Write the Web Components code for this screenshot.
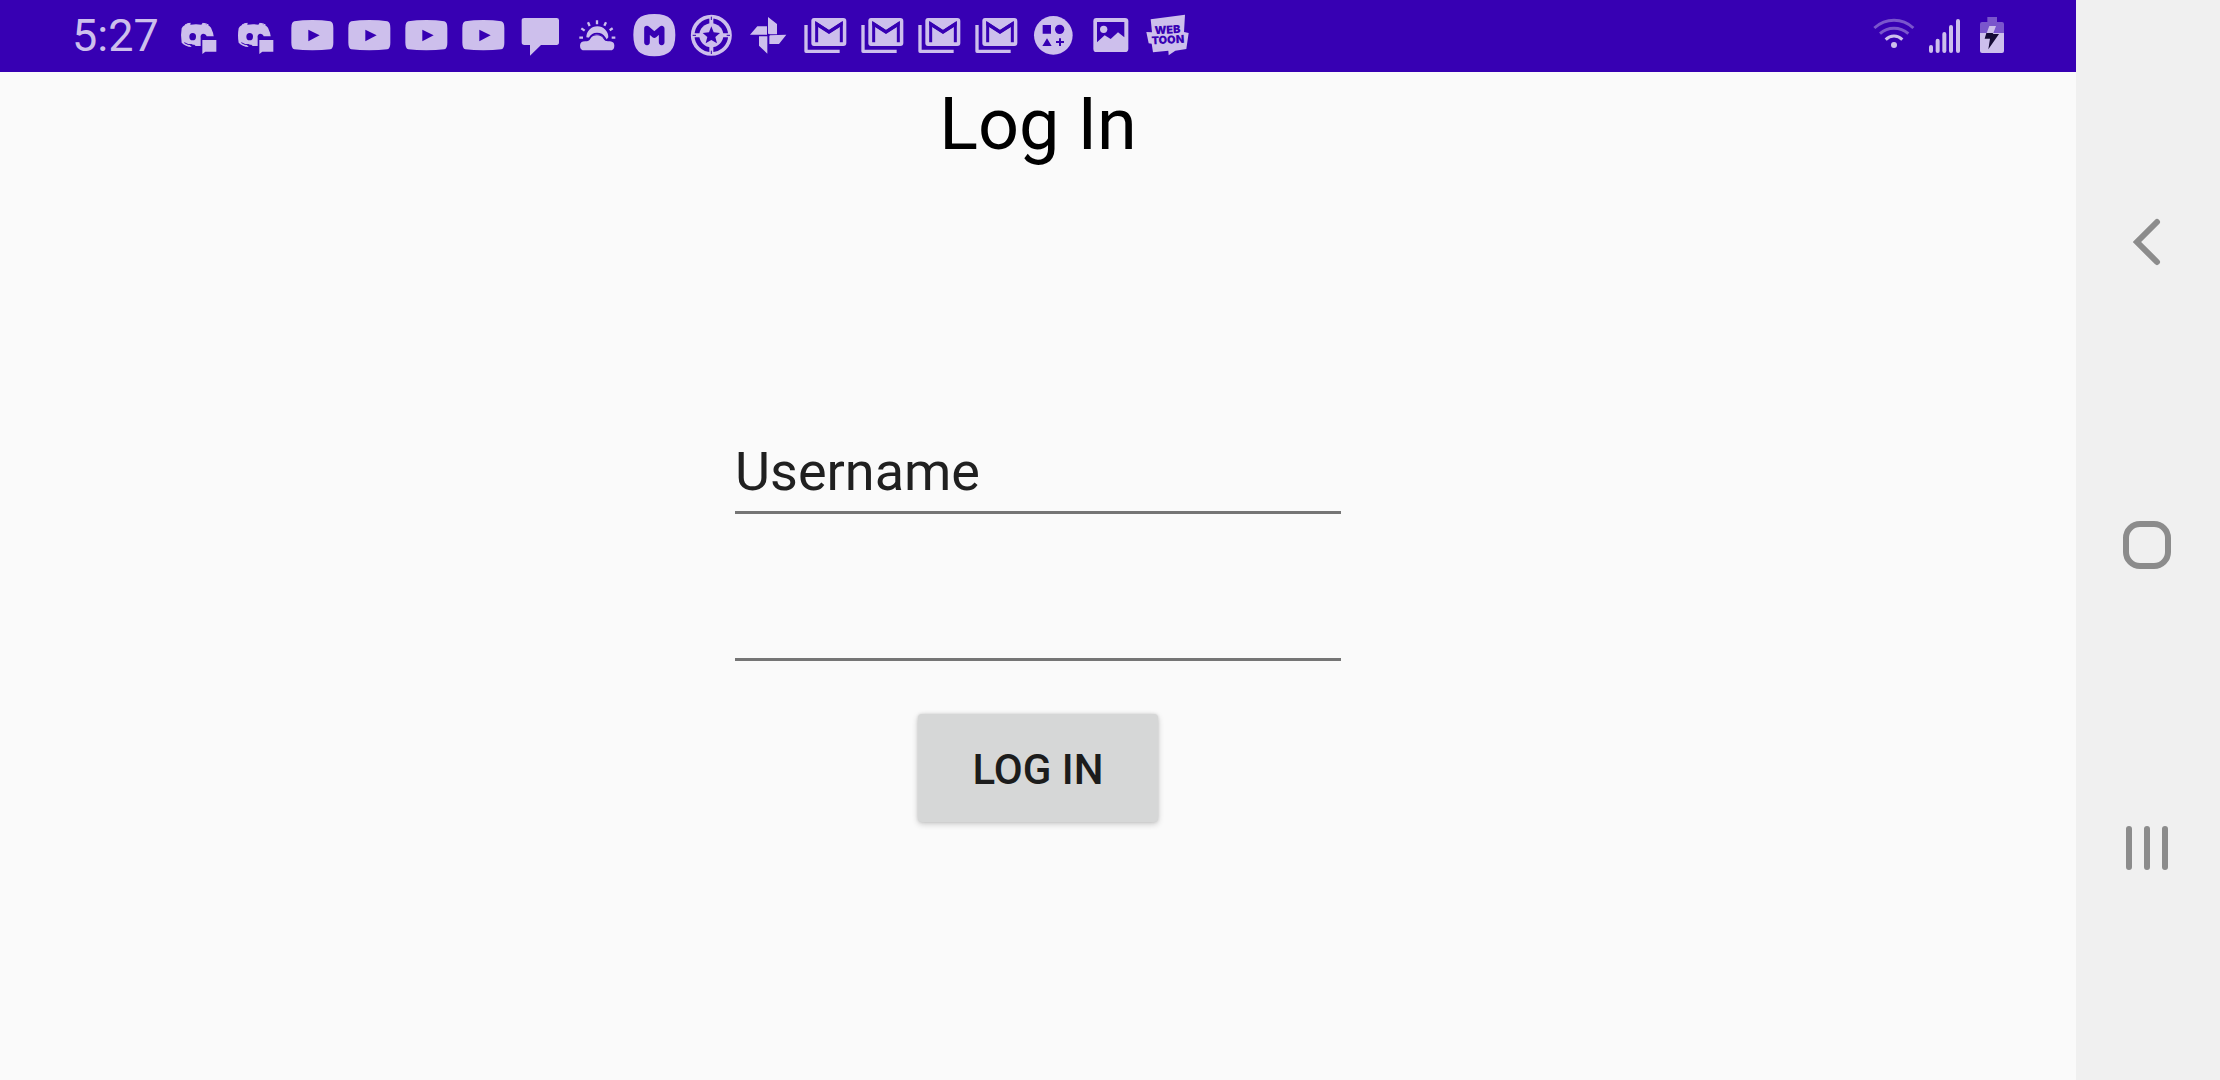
<!DOCTYPE html>
<html lang="en">
<head>
<meta charset="utf-8">
<title>Log In</title>
<style>
  html, body { margin: 0; height: 100%; }
  body { font-family: Roboto, sans-serif; background: #fafafa; }
</style>
</head>
<body>
<app-shell>
  <status-bar slot="status" time="5:27"></status-bar>
  <login-form heading="Log In"></login-form>
  <nav-bar slot="nav"></nav-bar>
</app-shell>

<script>
const define = (name, html, setup) => {
  const template = document.createElement('template');
  template.innerHTML = html;
  customElements.define(name, class extends HTMLElement {
    constructor() {
      super();
      this.attachShadow({ mode: 'open' }).append(template.content.cloneNode(true));
    }
    connectedCallback() { if (setup) setup(this, this.shadowRoot); }
  });
};

/* Notification icons: drawn on a 171 x 216 grid, x = 0 is the middle. */
const NOTES = {
  chat: `<path d="M-50 85Q-44 74-27 69L-23 74Q-7 71 9 74L13 69Q31 74 38 83Q46 98 48 119V138H-8L-12 134H-26L-20 141Q-39 140-50 128Q-54 107-50 85Z"/>
    <ellipse class="bg" cx="-17" cy="110" rx="10" ry="11"/>
    <path class="bg" d="M7 138V114Q5 103 14 101Q23 101 25 109H60V145H7Z"/>
    <path class="line" stroke-width="3" d="M-40 75Q-30 69-23 70M13 70Q23 70 31 75"/>
    <path d="M12 120H54V155H21L12 162Z"/>
    <path class="cut" stroke-width="3" d="M-42 128Q-31 136-18 134"/>`,
  video: '<path d="M-54 64Q-30 60 0 60T54 64Q63 66 63 84V128Q63 146 54 148Q30 151 0 151T-54 148Q-63 146-63 128V84Q-63 66-54 64Z"/><path class="bg" d="M-12 89V124L22 106Z"/>',
  message: '<path d="M-48 54H49Q56 54 56 61V127Q56 135 49 135H2L-31 167V135H-48Q-56 135-56 127V61Q-56 54-48 54Z"/>',
  weather: `<path d="M-33 112A33 33 0 0 1 33 112L26 121Q13 100-4 104Q-18 104-24 113Z"/>
    <path class="cut" stroke-width="5" d="M-37 124Q-27 120-23 114Q-16 101-1 101Q14 101 22 113L27 121Q42 120 48 126"/>
    <path d="M-38 151Q-52 151-52 137Q-52 124-36 124Q-25 124-21 116Q-14 106-1 106Q13 106 19 117Q22 124 32 124H38Q51 125 51 137Q51 151 38 151Z"/>
    <path class="line" stroke-width="7" d="M-1 61V73M-28 67L-23 78M26 67L21 77M-48 85L-38 92M46 85L37 91M-54 113H-43M43 113H54"/>`,
  monogram: `<path d="M0 42Q35 42 49 57Q63 72 63 105Q63 139 48 154Q34 169 0 169Q-34 169-48 154Q-63 139-63 105Q-63 72-49 57Q-35 42 0 42Z"/>
    <path class="cut" stroke-width="17" stroke-linecap="round" stroke-linejoin="round" d="M-22 127V86L0 105L22 86V127"/>`,
  star: `<circle class="line" cx="0" cy="106" r="56" stroke-width="11"/>
    <circle cx="0" cy="106" r="36"/>
    <path class="line" stroke-width="12" d="M0 52V74M0 138V160M-54 106H-32M32 106H54"/>
    <path class="bg" d="M0 79L7 97L26 99L12 111L17 130L0 120L-17 130L-12 111L-26 99L-7 97Z"/>
    <path class="cut" stroke-width="3" d="M0 50V60M0 152V162M-56 106H-46M46 106H56"/>`,
  pinwheel: '<path d="M-1 51L26 72V103H-1ZM54 104L32 132H3V106ZM-3 161L-28 137V109H-3ZM-55 104L-33 79H-4V104Z"/><circle class="bg" cx="0" cy="105" r="4"/>',
  mail: `<path d="M-34 54H54Q63 54 63 63V129Q63 138 54 138H-34Q-42 138-42 129V63Q-42 54-34 54Z"/>
    <path class="line" stroke-width="10" stroke-linejoin="round" d="M-58 75V154H43"/>
    <path class="cut" stroke-width="9" d="M-26 127V72L11 95L48 72V127"/><path class="bg" d="M-30 63L11 90L52 63V76L11 102L-30 76Z"/>`,
  shapes: `<circle cx="0" cy="106" r="58"/><path class="bg" d="M-32 75H-7V101H-32ZM-19 115L-5 138H-33Z"/><circle class="bg" cx="19" cy="88" r="14"/><path class="cut" stroke-width="6" d="M20 115V138M8 126H32"/>`,
  image: `<path d="M-42 54H44Q54 54 54 64V146Q54 156 44 156H-42Q-51 156-51 146V64Q-51 54-42 54Z"/>
    <path class="bg" d="M-40 66H42V112L23 97L1 117L-17 106L-40 127Z"/><circle cx="-20" cy="88" r="11"/>`,
  comic: `<path d="M-50 58L53 44L50 96L64 99L57 147L24 152L4 166L3 152L-43 157L-47 131L-56 130L-63 96L-46 97Z"/>
    <text class="bg" font-size="33" text-anchor="middle" x="1" y="101" transform="rotate(-3 0 100)">WEB</text>
    <text class="bg" font-size="33" text-anchor="middle" x="2" y="131" transform="rotate(-3 0 130)">TOON</text>`
};
const ORDER = ['chat','chat','video','video','video','video','message','weather','monogram','star','pinwheel','mail','mail','mail','mail','shapes','image','comic'];

define('app-shell', `
<style>
  :host { display: flex; min-height: 100vh; background: #fafafa; }
  .app { flex: 1; min-width: 0; display: flex; flex-direction: column; }
  main { flex: 1; }
</style>
<div class="app"><slot name="status"></slot><main><slot></slot></main></div>
<slot name="nav"></slot>`);

define('note-icon', `
<style>
  :host { display: block; flex: none; width: 57px; height: 72px; }
  svg { display: block; width: 100%; height: 100%; fill: #cdbfec; }
  .bg { fill: #3700b3; }
  .line { fill: none; stroke: #cdbfec; }
  .cut { fill: none; stroke: #3700b3; }
  text { font-family: Inter, sans-serif; font-weight: 900; }
</style>
<svg viewBox="-85 0 171 216" aria-hidden="true"></svg>`,
(host, root) => { root.querySelector('svg').innerHTML = NOTES[host.getAttribute('kind')]; });

define('status-bar', `
<style>
  :host { display: flex; align-items: center; justify-content: space-between; height: 72px;
          padding: 0 71px 0 72px; background: #3700b3; color: #cdbfec; }
  .left, .notes, .system { display: flex; align-items: center; }
  .left { gap: 11px; }
  time { font-size: 45px; line-height: 72px; }
  .system svg { display: block; height: 72px; width: 135px; fill: #cdbfec; }
</style>
<div class="left"><time></time><div class="notes"></div></div>
<div class="system">
  <svg viewBox="60 0 405 216" role="img" aria-label="Wi-Fi, signal and battery">
    <g fill="none" stroke="#cdbfec" stroke-width="9">
      <path d="M73 84Q99 61 132 61T190 84" opacity=".45"/>
      <path d="M90 101Q108 85 132 85T175 101" opacity=".45"/>
      <path d="M107 119Q118 108 132 108T157 119"/>
    </g>
    <circle cx="132" cy="135" r="9"/>
    <path fill="none" stroke="#cdbfec" stroke-width="12" stroke-linecap="round" d="M243 141V153M263 122V153M283 102V153M303 81V153M324 63V153"/>
    <path d="M412 51H441V66H456Q462 66 462 72V99H390V72Q390 66 396 66H412Z" opacity=".45"/>
    <path d="M390 99H462V153Q462 159 456 159H396Q390 159 390 153Z"/>
    <path d="M418 78H438L430 99H410Z"/>
    <path fill="#150a35" d="M409 99H430L428 102H447L415 148L420 116H404Z"/>
  </svg>
</div>`,
(host, root) => {
  root.querySelector('time').textContent = host.getAttribute('time');
  root.querySelector('.notes').replaceChildren(...ORDER.map(kind => {
    const icon = document.createElement('note-icon');
    icon.setAttribute('kind', kind);
    return icon;
  }));
});

define('text-field', `
<style>
  :host { display: block; }
  input { display: block; box-sizing: border-box; width: 100%; height: 75px; margin: 0; padding: 0 0 8px;
          border: 0; border-bottom: 3px solid #757575; border-radius: 0; outline: 0; background: none;
          font: 400 54px/64px Roboto, sans-serif; color: #202020; }
</style>
<input>`,
(host, root) => {
  const input = root.querySelector('input');
  input.type = host.getAttribute('type') || 'text';
  input.setAttribute('aria-label', host.getAttribute('label'));
  input.value = host.getAttribute('value') || '';
});

define('raised-button', `
<style>
  :host { display: block; }
  button { display: block; min-width: 240px; height: 108px; padding: 4px 48px 0; border: 0; border-radius: 4px;
           background: #d6d7d7; color: #1c1c1c; font: 500 42px/50px Roboto, sans-serif;
           text-transform: uppercase; box-shadow: 0 2px 6px rgba(0,0,0,.2), 0 0 3px rgba(0,0,0,.12); }
</style>
<button type="submit"><slot></slot></button>`);

define('login-form', `
<style>
  :host { display: block; padding-top: 5px; }
  h1 { margin: 0; font-weight: 400; font-size: 72px; line-height: 96px; text-align: center; color: #000; }
  form { display: flex; flex-direction: column; align-items: center; margin-top: 266px; }
  .fields { display: flex; flex-direction: column; gap: 72px; width: 606px; max-width: 100%; margin-bottom: 53px; }
</style>
<h1></h1>
<form>
  <div class="fields">
    <text-field label="Username" value="Username"></text-field>
    <text-field label="Password" type="password"></text-field>
  </div>
  <raised-button>LOG IN</raised-button>
</form>`,
(host, root) => { root.querySelector('h1').textContent = host.getAttribute('heading'); });

define('nav-bar', `
<style>
  :host { display: block; width: 144px; background: #f0f0f0; }
  nav { box-sizing: border-box; height: 100%; display: flex; flex-direction: column; padding: 90px 0 81px; }
  button { flex: 1; display: flex; align-items: center; justify-content: center; padding: 0; border: 0; background: none; }
  svg { width: 60px; height: 60px; fill: none; stroke: #8c8c8c; stroke-width: 6; stroke-linecap: round; }
</style>
<nav aria-label="System">
  <button aria-label="Back"><svg viewBox="0 0 60 60"><path d="M39 10L19 30L39 50"/></svg></button>
  <button aria-label="Home"><svg viewBox="0 0 60 60"><rect x="8" y="9" width="42" height="42" rx="14"/></svg></button>
  <button aria-label="Recent apps"><svg viewBox="0 0 60 60"><path d="M11 11V49M29 11V49M47 11V49"/></svg></button>
</nav>`);
</script>
</body>
</html>
